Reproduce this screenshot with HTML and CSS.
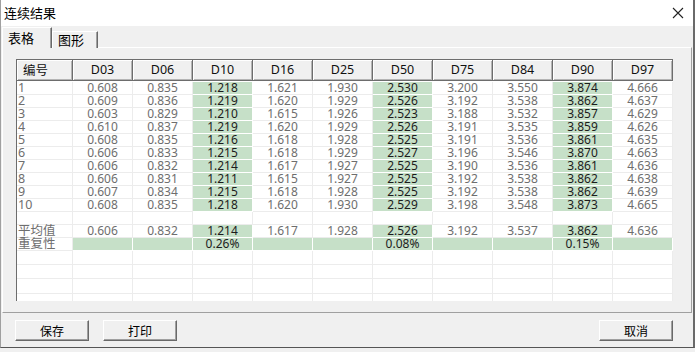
FILE: index.html
```html
<!DOCTYPE html>
<html>
<head>
<meta charset="utf-8">
<link rel="stylesheet" href="styles.css">
</head>
<body>
<div class="window">
  <div class="titlebar">
    <span class="title">连续结果</span>
    <svg class="close" width="12" height="12" viewBox="0 0 12 12"><path d="M1 1 L11 11 M11 1 L1 11" stroke="#222" stroke-width="1.1" fill="none"/></svg>
  </div>
  <div class="tabs">
    <div class="tab active">表格</div>
    <div class="tab">图形</div>
  </div>
  <div class="panel">
    <div class="grid">
      <table>
        <colgroup>
          <col class="c0"><col><col><col><col><col><col><col><col><col><col>
        </colgroup>
        <thead>
          <tr><th class="first">编号</th><th>D03</th><th>D06</th><th>D10</th><th>D16</th><th>D25</th><th>D50</th><th>D75</th><th>D84</th><th>D90</th><th>D97</th></tr>
        </thead>
        <tbody>
          <tr class="gap"><td></td><td></td><td></td><td></td><td></td><td></td><td></td><td></td><td></td><td></td><td></td></tr>
          <tr><td class="lab">1</td><td>0.608</td><td>0.835</td><td class="g">1.218</td><td>1.621</td><td>1.930</td><td class="g">2.530</td><td>3.200</td><td>3.550</td><td class="g">3.874</td><td>4.666</td></tr>
          <tr><td class="lab">2</td><td>0.609</td><td>0.836</td><td class="g">1.219</td><td>1.620</td><td>1.929</td><td class="g">2.526</td><td>3.192</td><td>3.538</td><td class="g">3.862</td><td>4.637</td></tr>
          <tr><td class="lab">3</td><td>0.603</td><td>0.829</td><td class="g">1.210</td><td>1.615</td><td>1.926</td><td class="g">2.523</td><td>3.188</td><td>3.532</td><td class="g">3.857</td><td>4.629</td></tr>
          <tr><td class="lab">4</td><td>0.610</td><td>0.837</td><td class="g">1.219</td><td>1.620</td><td>1.929</td><td class="g">2.526</td><td>3.191</td><td>3.535</td><td class="g">3.859</td><td>4.626</td></tr>
          <tr><td class="lab">5</td><td>0.608</td><td>0.835</td><td class="g">1.216</td><td>1.618</td><td>1.928</td><td class="g">2.525</td><td>3.191</td><td>3.536</td><td class="g">3.861</td><td>4.635</td></tr>
          <tr><td class="lab">6</td><td>0.606</td><td>0.833</td><td class="g">1.215</td><td>1.618</td><td>1.929</td><td class="g">2.527</td><td>3.196</td><td>3.546</td><td class="g">3.870</td><td>4.663</td></tr>
          <tr><td class="lab">7</td><td>0.606</td><td>0.832</td><td class="g">1.214</td><td>1.617</td><td>1.927</td><td class="g">2.525</td><td>3.190</td><td>3.536</td><td class="g">3.861</td><td>4.636</td></tr>
          <tr><td class="lab">8</td><td>0.606</td><td>0.831</td><td class="g">1.211</td><td>1.615</td><td>1.927</td><td class="g">2.525</td><td>3.192</td><td>3.538</td><td class="g">3.862</td><td>4.638</td></tr>
          <tr><td class="lab">9</td><td>0.607</td><td>0.834</td><td class="g">1.215</td><td>1.618</td><td>1.928</td><td class="g">2.525</td><td>3.192</td><td>3.538</td><td class="g">3.862</td><td>4.639</td></tr>
          <tr><td class="lab">10</td><td>0.608</td><td>0.835</td><td class="g">1.218</td><td>1.620</td><td>1.930</td><td class="g">2.529</td><td>3.198</td><td>3.548</td><td class="g">3.873</td><td>4.665</td></tr>
          <tr><td></td><td></td><td></td><td></td><td></td><td></td><td></td><td></td><td></td><td></td><td></td></tr>
          <tr><td class="lab">平均值</td><td>0.606</td><td>0.832</td><td class="g">1.214</td><td>1.617</td><td>1.928</td><td class="g">2.526</td><td>3.192</td><td>3.537</td><td class="g">3.862</td><td>4.636</td></tr>
          <tr><td class="lab">重复性</td><td class="g"></td><td class="g"></td><td class="g">0.26%</td><td class="g"></td><td class="g"></td><td class="g">0.08%</td><td class="g"></td><td class="g"></td><td class="g">0.15%</td><td class="g"></td></tr>
          <tr class="e14"><td></td><td></td><td></td><td></td><td></td><td></td><td></td><td></td><td></td><td></td><td></td></tr>
          <tr class="e14"><td></td><td></td><td></td><td></td><td></td><td></td><td></td><td></td><td></td><td></td><td></td></tr>
          <tr class="e15"><td></td><td></td><td></td><td></td><td></td><td></td><td></td><td></td><td></td><td></td><td></td></tr>
          <tr class="e15"><td></td><td></td><td></td><td></td><td></td><td></td><td></td><td></td><td></td><td></td><td></td></tr>
        </tbody>
      </table>
    </div>
  </div>
  <div class="buttons">
    <button class="btn">保存</button>
    <button class="btn">打印</button>
    <span class="spacer"></span>
    <button class="btn">取消</button>
  </div>
</div>
</body>
</html>
```

FILE: styles.css
```css
* { box-sizing: border-box; }
html, body { margin: 0; padding: 0; }
body {
  width: 695px;
  height: 352px;
  overflow: hidden;
  background: #f0f0f0;
  font-family: "Noto Sans", "Noto Sans CJK SC", sans-serif;
}
.window {
  width: 695px;
  height: 348px;
  background: #f0f0f0;
  border-left: 1px solid #a0a0a0;
  border-right: 2px solid #6a6a6a;
  border-bottom: 1px solid #555;
  display: flex;
  flex-direction: column;
}
.titlebar {
  height: 26px;
  flex: none;
  background: #fff;
  display: flex;
  align-items: center;
  justify-content: space-between;
  padding: 0 9px 1px 3px;
}
.title {
  font-family: "Noto Sans CJK SC", sans-serif;
  font-size: 13px;
  color: #000;
}
.close { display: block; }
.tabs {
  height: 22px;
  flex: none;
  display: flex;
  align-items: flex-end;
  padding-left: 1px;
  position: relative;
  z-index: 2;
  margin-bottom: -1px;
}
.tab {
  font-family: "Noto Sans CJK SC", sans-serif;
  font-size: 13px;
  color: #000;
  height: 17px;
  padding: 0 0 0 5px;
  width: 46px;
  line-height: 16px;
  background: #f0f0f0;
  border-top: 1px solid #fff;
  border-left: 1px solid #fff;
  border-right: 1px solid #696969;
  box-shadow: inset -1px 0 0 #a0a0a0;
}
.tab.active {
  height: 21px;
  width: 50px;
  padding-left: 5px;
  line-height: 20px;
}
.panel {
  height: 266px;
  width: 690px;
  flex: none;
  margin-left: 1px;
  border-top: 1px solid #fff;
  border-left: 1px solid #fff;
  border-right: 1px solid #a0a0a0;
  border-bottom: 1px solid #a0a0a0;
  padding: 11px 0 0 13px;
}
.grid {
  width: 657px;
  height: 242px;
  overflow: hidden;
  background: #fff;
  border-left: 1px solid #6d6d6d;
  border-top: 1px solid #6d6d6d;
}
table {
  table-layout: fixed;
  border-collapse: separate;
  border-spacing: 0;
  width: 656px;
}
col { width: 60px; }
col.c0 { width: 56px; }
th {
  height: 21px;
  padding: 0;
  background: #f0f0f0;
  font-family: "Noto Sans", "Noto Sans CJK SC", sans-serif;
  font-size: 12.5px;
  font-weight: normal;
  color: #111;
  text-align: center;
  border-right: 1px solid #6d6d6d;
  border-bottom: 1px solid #6d6d6d;
  box-shadow: inset 1px 1px 0 #fff, inset -1px -1px 0 #b4b4b4;
  line-height: 18px;
}
th.first {
  text-align: left;
  padding-left: 6px;
  font-family: "Noto Sans CJK SC", sans-serif;
}
td {
  height: 13px;
  padding: 0;
  font-size: 12px;
  line-height: 12px;
  color: #6e6e6e;
  text-align: center;
  white-space: nowrap;
  border-right: 1px solid #ececec;
  border-bottom: 1px solid #ececec;
}
tr.gap td { height: 1px; border: none; }
tr.e14 td { height: 14px; }
tr.e15 td { height: 15px; }
td.lab {
  text-align: left;
  padding-left: 1px;
  font-family: "Noto Sans", "Noto Sans CJK SC", sans-serif;
  font-size: 12.5px;
}
td.g {
  background: #c6e0c8;
  color: #1c1c1c;
  border-right-color: #fff;
  border-bottom-color: #fff;
}
.buttons {
  flex: none;
  display: flex;
  padding: 7px 20px 0 14px;
  gap: 14px;
}
.spacer { flex: 1; }
.btn {
  width: 74px;
  height: 21px;
  padding: 0;
  font-family: "Noto Sans CJK SC", sans-serif;
  font-size: 12px;
  color: #000;
  background: #f0f0f0;
  border-top: 1px solid #fff;
  border-left: 1px solid #fff;
  border-right: 1px solid #696969;
  border-bottom: 1px solid #696969;
  box-shadow: inset -1px -1px 0 #a0a0a0;
  line-height: 17px;
}
```
